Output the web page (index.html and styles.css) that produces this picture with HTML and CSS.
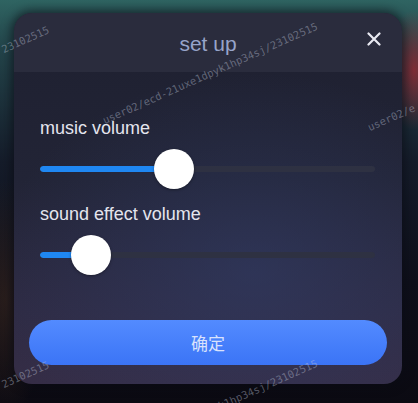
FILE: index.html
```html
<!DOCTYPE html>
<html lang="en">
<head>
<meta charset="utf-8">
<title>set up</title>
<link rel="stylesheet" href="styles.css">
</head>
<body>
<div class="backdrop">
  <div class="dialog">
    <div class="header">
      <span class="title">set up</span>
      <button class="close" aria-label="close">
        <svg width="14" height="14" viewBox="0 0 14 14"><path d="M1.5 1.5 L12.5 12.5 M12.5 1.5 L1.5 12.5" stroke="#e9eaf2" stroke-width="2.2" stroke-linecap="round"/></svg>
      </button>
    </div>
    <div class="content">
      <div class="setting">
        <div class="label">music volume</div>
        <div class="slider">
          <div class="track"><div class="fill" style="width:40%"></div></div>
          <div class="thumb" style="left:40%"></div>
        </div>
      </div>
      <div class="setting">
        <div class="label">sound effect volume</div>
        <div class="slider">
          <div class="track"><div class="fill" style="width:15.2%"></div></div>
          <div class="thumb" style="left:15.2%"></div>
        </div>
      </div>
    </div>
    <div class="footer">
      <button class="confirm">确定</button>
    </div>
  </div>
  <div class="wm wm1">23102515</div>
  <div class="wm wm2">user02/ecd-21uxe1dpyk1hp34sj/23102515</div>
  <div class="wm wm3">user02/e</div>
  <div class="wm wm4">23102515</div>
  <div class="wm wm5">user02/ecd-21uxe1dpyk1hp34sj/23102515</div>
</div>
</body>
</html>
```

FILE: styles.css
```css
html, body {
  margin: 0;
  padding: 0;
}
body {
  width: 418px;
  height: 403px;
  overflow: hidden;
  font-family: "Liberation Sans", "Noto Sans CJK SC", Arial, sans-serif;
}
.backdrop {
  position: relative;
  width: 418px;
  height: 403px;
  overflow: hidden;
  padding: 13px 16px 0 14px;
  box-sizing: border-box;
  background:
    radial-gradient(ellipse 30px 60px at 414px 70px, rgba(150,40,50,0.8), rgba(150,40,50,0) 100%),
    radial-gradient(ellipse 40px 120px at 6px 300px, rgba(60,40,30,0.6), rgba(60,40,30,0) 100%),
    linear-gradient(180deg, #2f6462 0%, #23444a 12%, #151c2a 40%, #0e0f1a 70%, #0b0a12 100%);
}
.dialog {
  width: 388px;
  height: 371px;
  border-radius: 18px;
  overflow: hidden;
  display: flex;
  flex-direction: column;
  background:
    radial-gradient(ellipse 260px 200px at 240px 260px, rgba(50,62,105,0.55), rgba(50,62,105,0) 100%),
    linear-gradient(180deg, #1e2030 0%, #222436 45%, #2e2b44 80%, #352d46 100%);
  box-shadow: 0 0 10px 3px rgba(10,12,20,0.6);
}
.header {
  position: relative;
  height: 59px;
  flex: none;
  background: #2a2c3d;
  display: flex;
  align-items: center;
  justify-content: center;
}
.title {
  font-size: 21px;
  color: #97a4c9;
  margin-top: 2px;
}
.close {
  position: absolute;
  right: 21px;
  top: 19px;
  width: 14px;
  height: 14px;
  padding: 0;
  border: 0;
  background: none;
  display: flex;
}
.content {
  flex: 1;
  padding: 45px 27px 0 26px;
  display: flex;
  flex-direction: column;
  gap: 14px;
}
.setting {
  display: flex;
  flex-direction: column;
  gap: 10px;
}
.label {
  font-size: 18px;
  line-height: 22px;
  color: #e4e5ee;
}
.slider {
  position: relative;
  height: 40px;
  display: flex;
  align-items: center;
}
.track {
  width: 100%;
  height: 6px;
  border-radius: 3px;
  background: #2e3142;
  overflow: hidden;
}
.fill {
  height: 100%;
  background: #1f87f2;
  border-radius: 3px;
}
.thumb {
  position: absolute;
  top: 0;
  width: 40px;
  height: 40px;
  margin-left: -20px;
  border-radius: 50%;
  background: #ffffff;
  box-shadow: 0 1px 3px rgba(0,0,0,0.35);
}
.footer {
  flex: none;
  padding: 0 15px 19px;
}
.confirm {
  width: 100%;
  height: 45px;
  border: 0;
  border-radius: 23px;
  background: linear-gradient(180deg, #538bff 0%, #3b74f6 100%);
  color: #d9e2fc;
  font-family: "Noto Sans CJK SC", "Liberation Sans", sans-serif;
  font-size: 17px;
  padding: 0;
}
.wm {
  position: absolute;
  font-family: "DejaVu Sans Mono", monospace;
  font-size: 10.5px;
  line-height: 13px;
  color: rgba(190,195,215,0.42);
  transform-origin: 0 100%;
  transform: rotate(-24deg);
  white-space: nowrap;
  pointer-events: none;
}
.wm1 { left: 5px; top: 43px; }
.wm2 { left: 106px; top: 114px; }
.wm3 { left: 371px; top: 121px; }
.wm4 { left: 5px; top: 378px; }
.wm5 { left: 106px; top: 451px; }
```
